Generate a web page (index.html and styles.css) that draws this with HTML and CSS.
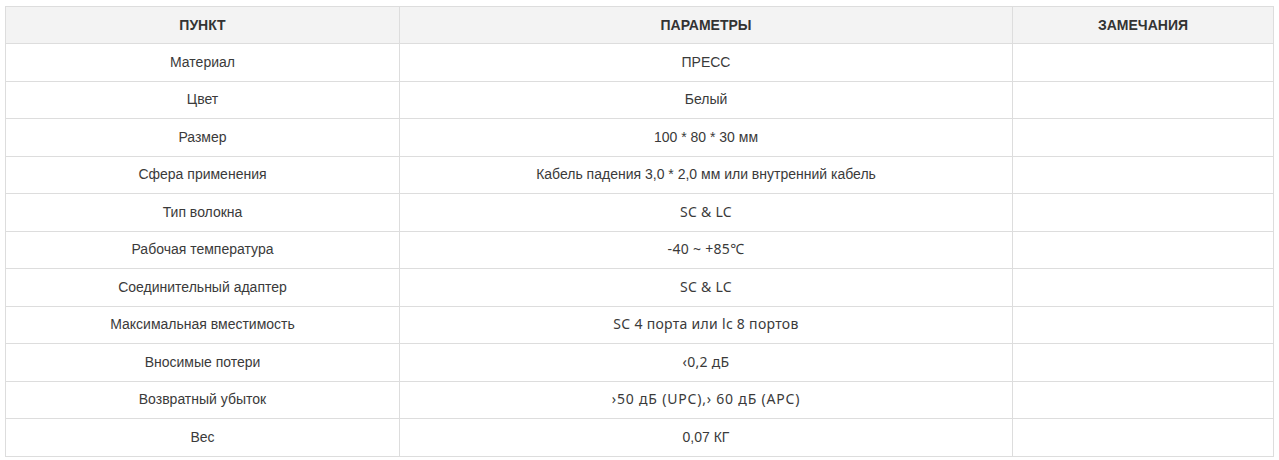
FILE: index.html
```html
<!DOCTYPE html>
<html lang="ru">
<head>
<meta charset="utf-8">
<link rel="stylesheet" href="styles.css">
</head>
<body>
<div class="wrap">
<table class="spec">
  <colgroup>
    <col class="c1"><col class="c2"><col class="c3">
  </colgroup>
  <thead>
    <tr><th>ПУНКТ</th><th>ПАРАМЕТРЫ</th><th>ЗАМЕЧАНИЯ</th></tr>
  </thead>
  <tbody>
    <tr><td>Материал</td><td>ПРЕСС</td><td></td></tr>
    <tr><td>Цвет</td><td>Белый</td><td></td></tr>
    <tr><td>Размер</td><td>100 * 80 * 30 мм</td><td></td></tr>
    <tr><td>Сфера применения</td><td>Кабель падения 3,0 * 2,0 мм или внутренний кабель</td><td></td></tr>
    <tr><td>Тип волокна</td><td class="geo">SC &amp; LC</td><td></td></tr>
    <tr><td>Рабочая температура</td><td class="geo">-40 ~ +85℃</td><td></td></tr>
    <tr><td>Соединительный адаптер</td><td class="geo">SC &amp; LC</td><td></td></tr>
    <tr><td>Максимальная вместимость</td><td class="geo">SC 4 порта или lc 8 портов</td><td></td></tr>
    <tr><td>Вносимые потери</td><td class="geo">‹0,2 дБ</td><td></td></tr>
    <tr><td>Возвратный убыток</td><td class="geo wide">›50 дБ (UPC),› 60 дБ (APC)</td><td></td></tr>
    <tr><td>Вес</td><td>0,07 КГ</td><td></td></tr>
  </tbody>
</table>
</div>
</body>
</html>
```
FILE: styles.css
```css
html, body {
  margin: 0;
  padding: 0;
  background: #ffffff;
}
.wrap {
  padding: 6px 6px 0 5px;
}
.spec {
  width: 1268px;
  border-collapse: collapse;
  table-layout: fixed;
  font-family: "Liberation Sans", Arial, sans-serif;
  font-size: 14px;
  line-height: 16px;
  color: #3a3a3a;
}
.c1 { width: 394px; }
.c2 { width: 613px; }
.c3 { width: 261px; }
.spec th,
.spec td {
  border: 1px solid #dddddd;
  text-align: center;
  vertical-align: middle;
  padding: 0 8px 1px;
}
.spec th {
  height: 35px;
  background: #f3f3f3;
  font-weight: bold;
  color: #333333;
}
.spec td {
  height: 35.5px;
}
.spec td.geo {
  font-family: "Noto Sans", "Liberation Sans", sans-serif;
  font-size: 14px;
  letter-spacing: 0.3px;
}
.spec td.wide {
  letter-spacing: 0.8px;
}
```
